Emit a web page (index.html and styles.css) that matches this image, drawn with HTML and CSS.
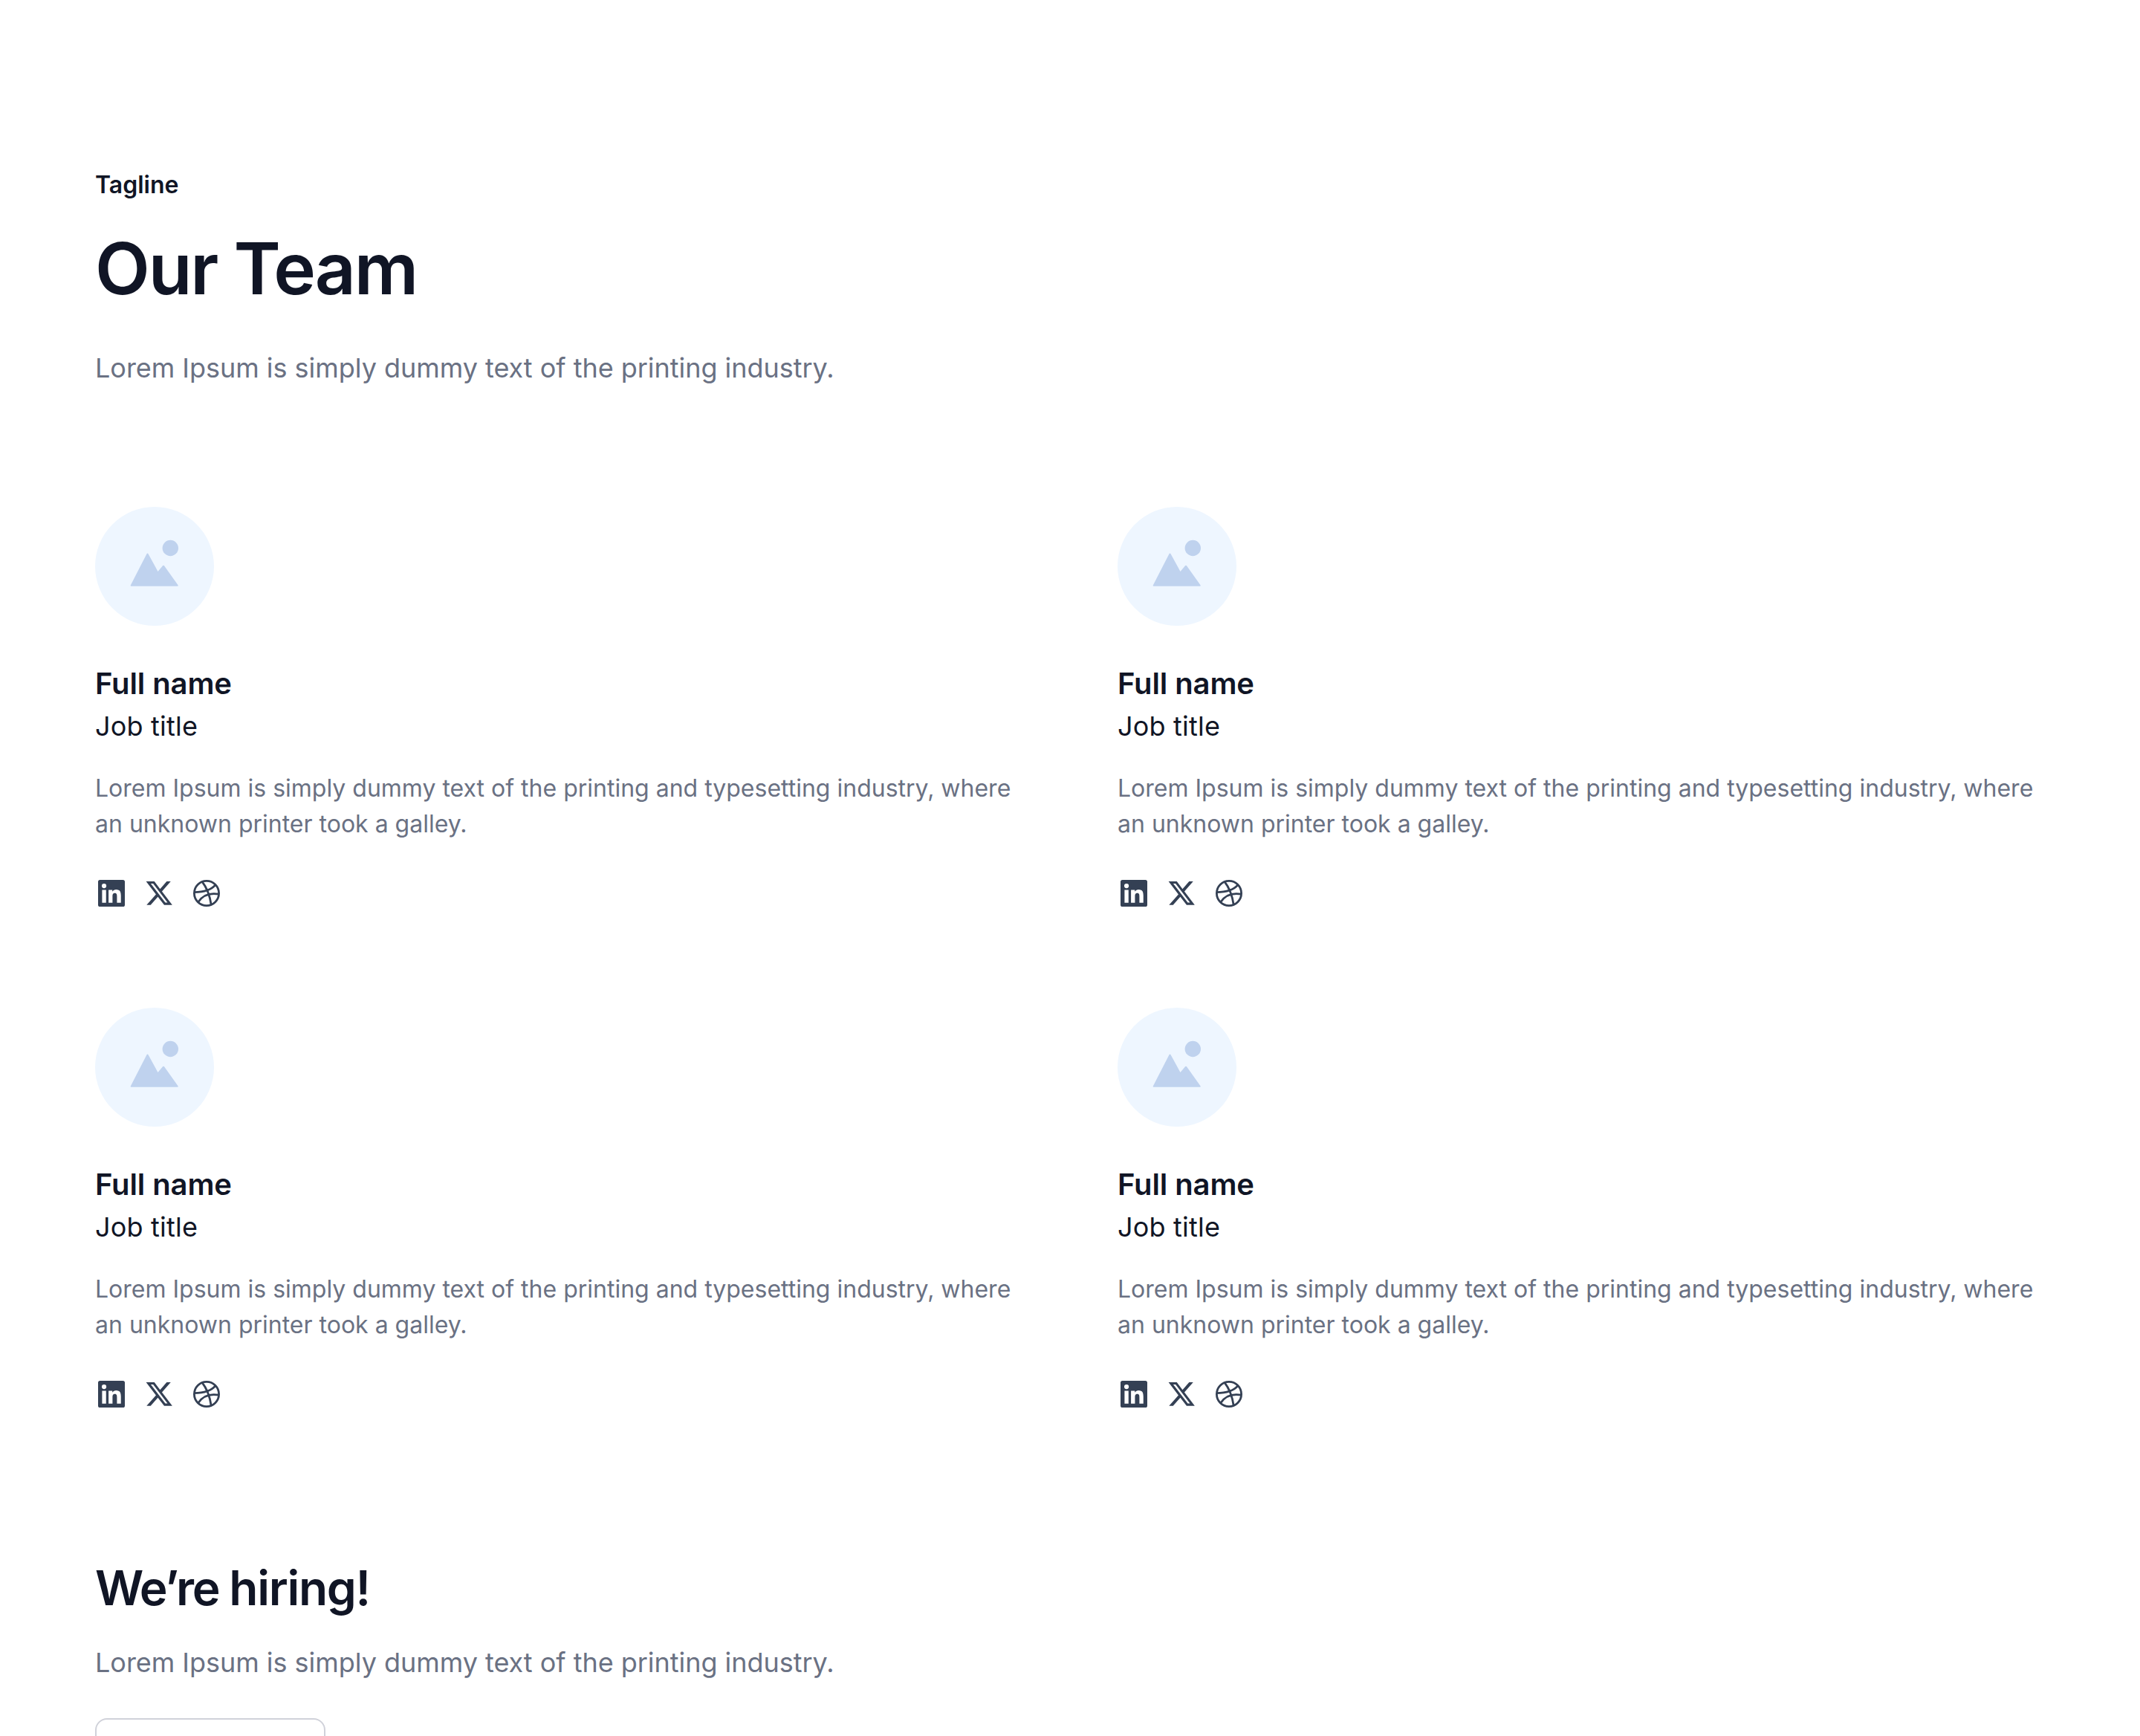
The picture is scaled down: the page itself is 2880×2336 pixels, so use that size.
FILE: index.html
```html
<!DOCTYPE html>
<html lang="en">
<head>
<meta charset="utf-8">
<title>Our Team</title>
<link rel="stylesheet" href="styles.css">
</head>
<body>
<svg class="sprite" aria-hidden="true">
  <symbol id="placeholder" viewBox="0 0 160 160">
    <circle cx="101.300" cy="55.500" r="10.700"/>
    <path d="M48.500 106.700Q47.300 106.700 47.800 105.500L69.500 63.200Q70.500 61.800 71.500 63.200L84.500 87L91 79.300Q92 78.300 93 79.300L111.500 105.200Q112.200 106.700 111 106.700Z"/>
  </symbol>
  <symbol id="linkedin" viewBox="0 0 24 24">
    <path fill-rule="evenodd" d="M3.300 2H18.700A1.300 1.300 0 0 1 20 3.300V18.700A1.300 1.300 0 0 1 18.700 20H3.300A1.300 1.300 0 0 1 2 18.700V3.300A1.300 1.300 0 0 1 3.300 2ZM4.700 8.750V17.340H7.370V8.750ZM6.030 4.480A1.550 1.550 0 1 0 6.030 7.580A1.550 1.550 0 0 0 6.030 4.480ZM9.050 8.750V17.340H11.710V13.090C11.710 11.970 11.920 10.880 13.310 10.880C14.680 10.880 14.700 12.160 14.700 13.160V17.340H17.370V12.630C17.370 10.310 16.870 8.540 14.170 8.540C12.870 8.540 12 9.250 11.640 9.930H11.600V8.750Z"/>
  </symbol>
  <symbol id="x" viewBox="0 0 24 24">
    <path fill-rule="evenodd" d="M16.180 3H18.880L12.980 9.740L19.920 18.930H14.480L10.230 13.360L5.350 18.930H2.650L8.960 11.710L2.300 3H7.870L11.720 8.090ZM15.230 17.310H16.730L7.070 4.530H5.470Z"/>
  </symbol>
  <symbol id="dribbble" viewBox="0 0 24 24">
    <g fill="none" stroke="currentColor" stroke-width="1.400">
      <circle cx="11" cy="11" r="8.300"/>
      <path d="M8 3.200C10.600 6.500 13 11.300 14.100 18.700M2.600 10.300C8.500 10.300 14 9 17.100 5.200M5.300 17C8.500 12 13 10.500 19.300 11.600"/>
    </g>
  </symbol>
</svg>
<main class="team">
  <header class="intro">
    <p class="tagline">Tagline</p>
    <h1 class="title">Our Team</h1>
    <p class="lead">Lorem Ipsum is simply dummy text of the printing industry.</p>
  </header>
  <section class="members">
    <article class="member">
      <svg class="avatar"><use href="#placeholder"/></svg>
      <h2 class="name">Full name</h2>
      <p class="job">Job title</p>
      <p class="bio">Lorem Ipsum is simply dummy text of the printing and typesetting industry, where an unknown printer took a galley.</p>
      <div class="social"><svg class="icon"><use href="#linkedin"/></svg><svg class="icon"><use href="#x"/></svg><svg class="icon"><use href="#dribbble"/></svg></div>
    </article>
    <article class="member">
      <svg class="avatar"><use href="#placeholder"/></svg>
      <h2 class="name">Full name</h2>
      <p class="job">Job title</p>
      <p class="bio">Lorem Ipsum is simply dummy text of the printing and typesetting industry, where an unknown printer took a galley.</p>
      <div class="social"><svg class="icon"><use href="#linkedin"/></svg><svg class="icon"><use href="#x"/></svg><svg class="icon"><use href="#dribbble"/></svg></div>
    </article>
    <article class="member">
      <svg class="avatar"><use href="#placeholder"/></svg>
      <h2 class="name">Full name</h2>
      <p class="job">Job title</p>
      <p class="bio">Lorem Ipsum is simply dummy text of the printing and typesetting industry, where an unknown printer took a galley.</p>
      <div class="social"><svg class="icon"><use href="#linkedin"/></svg><svg class="icon"><use href="#x"/></svg><svg class="icon"><use href="#dribbble"/></svg></div>
    </article>
    <article class="member">
      <svg class="avatar"><use href="#placeholder"/></svg>
      <h2 class="name">Full name</h2>
      <p class="job">Job title</p>
      <p class="bio">Lorem Ipsum is simply dummy text of the printing and typesetting industry, where an unknown printer took a galley.</p>
      <div class="social"><svg class="icon"><use href="#linkedin"/></svg><svg class="icon"><use href="#x"/></svg><svg class="icon"><use href="#dribbble"/></svg></div>
    </article>
  </section>
  <section class="hiring">
    <h2 class="hiring-title"><span class="tight">We’re </span>hiring!</h2>
    <p class="lead">Lorem Ipsum is simply dummy text of the printing industry.</p>
    <button class="button" type="button"></button>
  </section>
</main>
</body>
</html>
```
FILE: styles.css
```css
* { box-sizing: border-box; margin: 0; }

body {
  height: 2336px;
  overflow: hidden;
  background: #fff;
  color: #101525;
  font-family: Inter, sans-serif;
  font-size: 32px;
  line-height: 48px;
}

.sprite { display: none; }

.team { padding: 225px 128px 0; }

.tagline { font-weight: 600; }

.title {
  margin: 30px 0 49px;
  font-size: 96px;
  font-weight: 600;
  line-height: 116px;
  letter-spacing: -0.022em;
}

.lead {
  color: #6a7183;
  font-size: 36px;
  line-height: 54px;
  letter-spacing: -0.03px;
}

.members {
  display: grid;
  grid-template-columns: 1fr 1fr;
  gap: 128px;
  margin-top: 160px;
}

.avatar {
  display: block;
  width: 160px;
  height: 160px;
  margin-bottom: 48px;
  border-radius: 50%;
  background: #eef6ff;
  fill: #bfd2ee;
}

.name {
  font-size: 40px;
  font-weight: 600;
  line-height: 60px;
  letter-spacing: -0.1px;
}

.job {
  font-size: 36px;
  line-height: 54px;
  letter-spacing: 0.2px;
}

.bio {
  margin: 33px 0 47px;
  color: #6a7183;
}

.social {
  display: flex;
  gap: 16px;
  color: #344054;
}

.icon {
  width: 48px;
  height: 48px;
  fill: currentColor;
}

.hiring { margin-top: 193px; }

.hiring-title {
  margin-bottom: 31px;
  font-size: 64px;
  font-weight: 600;
  line-height: 84px;
  letter-spacing: -0.02em;
}

.tight { letter-spacing: -0.0345em; }

.button {
  display: block;
  width: 310px;
  height: 96px;
  margin-top: 48px;
  border: 2px solid #d0d2da;
  border-radius: 16px;
  background: #fff;
}
```
